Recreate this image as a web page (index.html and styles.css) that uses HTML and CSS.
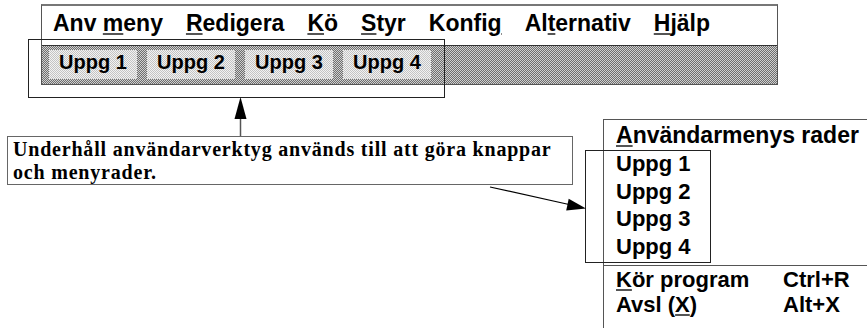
FILE: index.html
```html
<!DOCTYPE html>
<html lang="sv">
<head>
    <meta charset="UTF-8">
    <meta name="viewport" content="width=device-width, initial-scale=1.0">
    <title>Användarmeny</title>
    <link rel="stylesheet" href="styles.css">
</head>
<body>

    <div class="diagram">

        <!-- Programfönster med menyrad och knapprad -->
        <div class="appwin">
            <div class="menubar">
                <span>Anv <u>m</u>eny</span>
                <span><u>R</u>edigera</span>
                <span><u>K</u>ö</span>
                <span><u>S</u>tyr</span>
                <span>Konfi<u>g</u></span>
                <span>Al<u>t</u>ernativ</span>
                <span><u>H</u>jälp</span>
            </div>
            <div class="toolbar">
                <span class="tool-btn">Uppg 1</span>
                <span class="tool-btn">Uppg 2</span>
                <span class="tool-btn">Uppg 3</span>
                <span class="tool-btn">Uppg 4</span>
            </div>
        </div>

        <!-- Användarmenyn -->
        <div class="usermenu">
            <div class="menu-title"><u>A</u>nvändarmenys rader</div>
            <ul class="menu-items">
                <li>Uppg 1</li>
                <li>Uppg 2</li>
                <li>Uppg 3</li>
                <li>Uppg 4</li>
            </ul>
            <div class="menu-fixed">
                <span><u>K</u>ör program</span><span>Ctrl+R</span>
                <span>Avsl (<u>X</u>)</span><span>Alt+X</span>
            </div>
        </div>

        <!-- Markeringar -->
        <div class="mark mark-tools"></div>
        <div class="mark mark-items"></div>

        <div class="note">
            Underhåll användarverktyg används till att göra knappar<br>
            och menyrader.
        </div>

        <svg class="arrows" width="867" height="328" viewBox="0 0 867 328">
            <line x1="240.5" y1="118" x2="240.5" y2="136" stroke="#555" stroke-width="1.5"/>
            <polygon points="240.5,97 234.5,119 246.5,119" fill="#000"/>
            <line x1="490" y1="187" x2="569" y2="204.5" stroke="#000" stroke-width="1.2"/>
            <polygon points="586,208.5 568.7,198.7 566.2,210.4" fill="#000"/>
        </svg>

    </div>

</body>
</html>
```

FILE: styles.css
```css
/* Page and drawing area */
body {
    margin: 0;
    background: #fff;
    color: #000;
    font-family: "Liberation Sans", Arial, sans-serif;
    font-weight: bold;
}
.diagram {
    position: relative;
    width: 867px;
    height: 328px;
    overflow: hidden;
}
u {
    text-decoration: underline;
    text-decoration-color: #555;
    text-decoration-thickness: 2px;
    text-underline-offset: 2px;
}

/* Program window */
.appwin {
    position: absolute;
    left: 41px;
    top: 4px;
    width: 737px;
    height: 81px;
    box-sizing: border-box;
    border: 1px solid #555;
    border-top: 2px solid #777;
    background: #fff;
    display: flex;
    flex-direction: column;
}
.menubar {
    height: 39px;
    box-sizing: border-box;
    padding: 4px 0 0 11px;
    display: flex;
    gap: 23px;
    font-size: 23px;
    line-height: 26px;
}
.toolbar {
    flex: 1;
    border-top: 1px solid #333;
    padding: 4px 7px;
    display: flex;
    gap: 10px;
    background: repeating-conic-gradient(#6e6e6e 0 25%, #d0d0d0 0 50%) 0 0 / 2px 2px;
}
.tool-btn {
    width: 88px;
    height: 29px;
    padding-top: 1px;
    box-sizing: border-box;
    text-align: center;
    font-size: 20px;
    line-height: 22px;
    background: repeating-conic-gradient(#c4c4c4 0 25%, #f2f2f2 0 50%) 0 0 / 2px 2px;
}

/* User menu */
.usermenu {
    position: absolute;
    left: 603px;
    top: 119px;
    width: 300px;
    height: 230px;
    box-sizing: border-box;
    border-left: 1px solid #555;
    border-top: 1px solid #555;
    background: #fff;
    font-size: 22px;
}
.menu-title {
    padding: 2px 0 0 12px;
    font-size: 23px;
    line-height: 26px;
}
.menu-items {
    list-style: none;
    margin: 2px 0 0;
    padding: 0 0 0 12px;
    line-height: 27.5px;
}
.menu-fixed {
    margin-top: 5px;
    border-top: 1px solid #555;
    padding: 1px 0 0 12px;
    display: grid;
    grid-template-columns: 167px auto;
    line-height: 25px;
}

/* Outline marks and note */
.mark {
    position: absolute;
    border: 1px solid #222;
}
.mark-tools {
    left: 28px;
    top: 39px;
    width: 415px;
    height: 57px;
}
.mark-items {
    left: 585px;
    top: 150px;
    width: 124px;
    height: 111px;
}
.note {
    position: absolute;
    left: 7px;
    top: 136px;
    width: 566px;
    height: 49px;
    box-sizing: border-box;
    border: 1px solid #666;
    padding: 1px 5px 0;
    font-family: "Liberation Serif", "Times New Roman", serif;
    font-size: 20px;
    line-height: 22.5px;
    letter-spacing: 0.8px;
}
.arrows {
    position: absolute;
    left: 0;
    top: 0;
}
```
